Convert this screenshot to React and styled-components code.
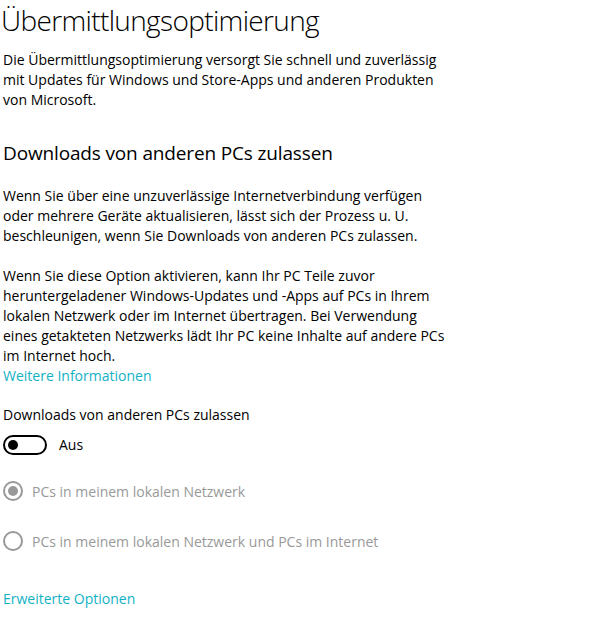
import React from 'react';
import styled, { createGlobalStyle } from 'styled-components';

const GlobalStyle = createGlobalStyle`
  html, body {
    margin: 0;
    padding: 0;
    background: #ffffff;
  }
  body {
    font-family: 'Open Sans', 'Noto Sans', sans-serif;
    color: #000000;
  }
`;

const Page = styled.div`
  display: flex;
  flex-direction: column;
  padding: 0 0 0 3px;
  width: 470px;
`;

const Title = styled.h1`
  margin: 0;
  font-size: 28px;
  font-weight: 300;
  line-height: 40px;
  margin-left: -2px;
  letter-spacing: -0.65px;
`;

const Subtitle = styled.h2`
  margin: 29px 0 0 0;
  font-size: 19px;
  font-weight: 400;
  line-height: 28px;
  letter-spacing: -0.15px;
`;

const Text = styled.p`
  margin: ${props => props.margin || '0'};
  font-size: 14px;
  line-height: 20px;
  letter-spacing: 0;
  color: #000000;
`;

const Link = styled.a`
  display: block;
  margin: ${props => props.margin || '0'};
  font-size: 14px;
  line-height: 20px;
  color: #12b2c5;
  text-decoration: none;
`;

const ToggleRow = styled.div`
  display: flex;
  align-items: center;
  gap: 12px;
  margin-top: 10px;
  height: 20px;
`;

const Track = styled.div`
  box-sizing: border-box;
  width: 44px;
  height: 20px;
  border: 2px solid #000000;
  border-radius: 10px;
  display: flex;
  align-items: center;
  padding-left: 3px;
`;

const Knob = styled.div`
  width: 10px;
  height: 10px;
  border-radius: 50%;
  background: #000000;
`;

const RadioRow = styled.label`
  display: flex;
  align-items: center;
  gap: 9px;
  height: 20px;
  margin-top: ${props => props.top}px;
`;

const RadioCircle = styled.span`
  box-sizing: border-box;
  width: 20px;
  height: 20px;
  border: 2px solid #999999;
  border-radius: 50%;
  display: flex;
  align-items: center;
  justify-content: center;
  &::after {
    content: '';
    width: 10px;
    height: 10px;
    border-radius: 50%;
    background: ${props => (props.checked ? '#999999' : 'transparent')};
  }
`;

const RadioText = styled.span`
  font-size: 14px;
  color: #999999;
`;

function Radio({ checked, label, top }) {
  return (
    <RadioRow top={top}>
      <RadioCircle checked={checked} />
      <RadioText>{label}</RadioText>
    </RadioRow>
  );
}

export default function App() {
  return (
    <>
      <GlobalStyle />
      <Page>
        <Title>Übermittlungsoptimierung</Title>
        <Text margin="10px 0 0 0">
          Die Übermittlungsoptimierung versorgt Sie schnell und zuverlässig
          <br />
          mit Updates für Windows und Store-Apps und anderen Produkten
          <br />
          von Microsoft.
        </Text>
        <Subtitle>Downloads von anderen PCs zulassen</Subtitle>
        <Text margin="19px 0 0 0">
          Wenn Sie über eine unzuverlässige Internetverbindung verfügen
          <br />
          oder mehrere Geräte aktualisieren, lässt sich der Prozess u. U.
          <br />
          beschleunigen, wenn Sie Downloads von anderen PCs zulassen.
        </Text>
        <Text margin="20px 0 0 0">
          Wenn Sie diese Option aktivieren, kann Ihr PC Teile zuvor
          <br />
          heruntergeladener Windows-Updates und -Apps auf PCs in Ihrem
          <br />
          lokalen Netzwerk oder im Internet übertragen. Bei Verwendung
          <br />
          eines getakteten Netzwerks lädt Ihr PC keine Inhalte auf andere PCs
          <br />
          im Internet hoch.
        </Text>
        <Link href="#">Weitere Informationen</Link>
        <Text margin="19px 0 0 0">Downloads von anderen PCs zulassen</Text>
        <ToggleRow>
          <Track>
            <Knob />
          </Track>
          <Text>Aus</Text>
        </ToggleRow>
        <Radio checked top={26} label="PCs in meinem lokalen Netzwerk" />
        <Radio top={30} label="PCs in meinem lokalen Netzwerk und PCs im Internet" />
        <Link href="#" margin="38px 0 0 0">Erweiterte Optionen</Link>
      </Page>
    </>
  );
}
